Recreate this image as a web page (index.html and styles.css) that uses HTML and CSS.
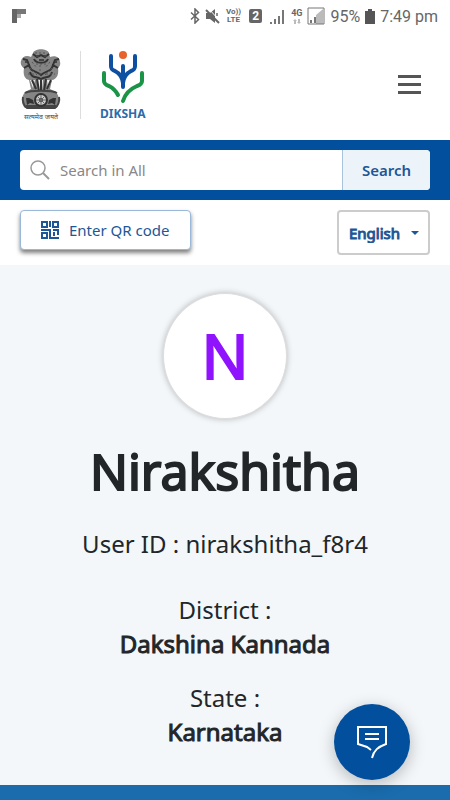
FILE: index.html
```html
<!DOCTYPE html>
<html lang="en">
<head>
    <meta charset="UTF-8">
    <meta name="viewport" content="width=device-width, initial-scale=1.0">
    <title>DIKSHA - Profile</title>
    <link rel="stylesheet" href="styles.css">
</head>
<body>
    <div class="status-bar">
        <svg width="14" height="14" viewBox="0 0 14 14"><path fill="#666" d="M0 0h5v14H0z"/><path fill="#777" d="M5 0h9v5H5z"/><path fill="#aaa" d="M5 5h4v4H5z"/></svg>
        <div class="status-icons">
            <svg width="10" height="16" viewBox="0 0 10 16" fill="none" stroke="#666" stroke-width="1.5"><path d="M1 4.500l7.500 7L5 15V1l3.500 3.500L1 11.500"/></svg>
            <svg width="16" height="16" viewBox="0 0 16 16"><path fill="#666" d="M1 5h4l5-4v14l-5-4H1z"/><path d="M3 0l12 13" stroke="#fff"/><path d="M1 2l13 13" stroke="#666" stroke-width="2"/><path d="M12 5v3" stroke="#666" stroke-width="1.500"/></svg>
            <span class="volte">Vo))<br>LTE</span>
            <span class="sim">2</span>
            <svg width="16" height="15" viewBox="0 0 16 15"><path fill="#777" d="M0 13h2v2H0zM4 10h2v5H4zM8 7h2v8H8zM12 1h2v14h-2z"/></svg>
            <span class="network">4G<svg width="8" height="5" viewBox="0 0 8 5"><path fill="#bbb" d="M0 2l2-2 2 2H3v3H1V2zM4 3l2 2 2-2H7V0H5v3z"/></svg></span>
            <svg width="18" height="18" viewBox="0 0 18 18"><path fill="#bbb" d="M9 17V8l7-6v15z"/><path fill="#777" d="M3 13h2v3H3zM7 10h2v6H7z"/><path fill="none" stroke="#777" d="M1 1h16v16H1z"/></svg>
            <span>95%</span>
            <svg width="10" height="15" viewBox="0 0 10 15"><path fill="#555" d="M3 0h4v2h3v13H0V2h3z"/></svg>
            <span>7:49 pm</span>
        </div>
    </div>

    <header>
        <a href="#" class="emblem" aria-label="Government of India">
            <svg width="42" height="64" viewBox="0 0 42 64">
                <path fill="#858585" d="M13 4c2-5 14-5 16 0l1 4c5-2 10 0 10 5 1 3-1 5-2 6 1 6-1 11-6 12l-2 9 6 3c4 5 4 12 0 16H5c-4-4-4-11 0-16l6-3-2-9c-5-1-6-6-5-12-2-1-4-4-3-7 1-5 6-6 10-4z"/>
                <path fill="#eee" d="M10 31l3 8 2-8zM18 31l1 10h3l1-10zM27 31l1 9 4-9z"/>
                <path fill="none" stroke="#333" stroke-width="2" d="M13 5l4 3 4-2 4 2 4-3M14 10c2 5 12 5 14 0M3 10l4 1 2 5-5 3M39 10l-4 1-2 5 5 3M9 16c2 8 7 5 12 10 5-5 10-2 12-10M10 23c2 7 6 4 11 7 5-3 9 0 11-7M12 31l4 9M17 30l2 12M21 31v10M26 30l-2 12M31 31l-4 9"/>
                <path fill="none" stroke="#555" stroke-dasharray="2 2" d="M12 13l5 6M30 13l-5 6M16 15h10M8 25h8M26 25h9M15 4h12M20 16v12M10 19l7 7M32 19l-7 7"/>
                <path fill="#444" d="M16 6h3v2h-3zM24 6h3v2h-3zM19 10h5v2h-5zM5 12h2v2H5zM35 12h2v2h-2z"/>
                <path fill="none" stroke="#444" stroke-width="2" d="M5 44c5-3 27-3 32 0M3 48c-1 4 1 9 4 11h28c3-2 5-7 4-11M6 57h30"/>
                <path fill="#333" d="M6 49h3l4 2 1 4-4-1-3 2zM36 49h-3l-4 2-1 4 4-1 3 2z"/>
                <circle cx="21" cy="51" r="6" fill="#ccc" stroke="#333" stroke-width="2"/>
                <circle cx="21" cy="51" r="2" fill="#333"/>
                <path stroke="#666" d="M21 46v10M16 51h10M18 48l6 6M24 48l-6 6"/>
            </svg>
            <span lang="hi">सत्यमेव जयते</span>
        </a>
        <a href="#" class="brand">
            <svg width="44" height="54" viewBox="0 0 44 54" fill="none" stroke-width="4" stroke-linecap="round">
                <circle cx="22" cy="5" r="4" fill="#e8622c"/>
                <g stroke="#0d4fa0">
                    <path d="M10 6v10c0 3 1 4 4 5 4 2 7 5 8 12M34 6v10c0 3-1 4-4 5-4 2-7 5-8 12M22 16v21"/>
                </g>
                <g stroke="#1b9448">
                    <path d="M3 23v8c0 3 2 4 5 5 4 2 7 5 9 9M41 23v8c0 3-2 4-5 5-7 3-12 8-14 15"/>
                </g>
            </svg>
            <span>DIKSHA</span>
        </a>
        <button type="button" class="menu" aria-label="Menu"><i></i><i></i><i></i></button>
    </header>

    <form class="search-bar">
        <div class="search-box">
            <svg width="20" height="20" viewBox="0 0 20 20" fill="none" stroke="#999"><circle cx="8" cy="8" r="7" stroke-width="1.500"/><path stroke-width="2" d="M13 13l6 6"/></svg>
            <input type="search" placeholder="Search in All" aria-label="Search in All">
            <button type="submit">Search</button>
        </div>
    </form>

    <div class="toolbar">
        <button type="button" class="qr">
            <svg width="18" height="18" viewBox="0 0 18 18" fill="none" stroke="#1d5796" stroke-width="2"><path d="M1 1h5v5H1zM12 1h5v5h-5zM1 12h5v5H1zM9 0v6M0 9h9v8h9M12 9h5v5M13 11v4"/></svg>
            Enter QR code
        </button>
        <div class="language">
            <select aria-label="Language">
                <option>English</option>
            </select>
        </div>
    </div>

    <main>
        <div class="avatar">N</div>
        <h1>Nirakshitha</h1>
        <p class="user-id">User ID : nirakshitha_f8r4</p>
        <dl>
            <dt>District :</dt>
            <dd>Dakshina Kannada</dd>
            <dt>State :</dt>
            <dd>Karnataka</dd>
        </dl>
    </main>

    <footer></footer>

    <button type="button" class="chat" aria-label="Help">
        <svg width="32" height="34" viewBox="0 0 32 34" fill="none" stroke="#fff" stroke-width="2"><path d="M15 25l-4-3-9-3V2h28v17c-8 3-12 6-14 14M9 9h14M9 14h14"/></svg>
    </button>
</body>
</html>
```
FILE: styles.css
```css
* {
    box-sizing: border-box;
}

body {
    margin: 0;
    min-height: 100vh;
    display: flex;
    flex-direction: column;
    font-family: "Noto Sans", sans-serif;
    font-size: 15px;
    color: #222629;
    background: #fff;
}

svg {
    display: block;
    flex: none;
}

button,
input,
select {
    font: inherit;
}

a {
    text-decoration: none;
}

/* phone status bar */
.status-bar {
    display: flex;
    justify-content: space-between;
    align-items: center;
    height: 32px;
    padding: 0 12px;
    font-family: Roboto, sans-serif;
    font-size: 16px;
    color: #666;
}

.status-icons {
    display: flex;
    align-items: center;
    gap: 5px;
}

.volte {
    font-size: 8px;
    font-weight: bold;
    line-height: 8px;
    text-align: center;
}

.sim {
    width: 13px;
    margin: 0 3px;
    border-radius: 2px;
    background: #666;
    color: #fff;
    font-size: 12px;
    font-weight: bold;
    line-height: 14px;
    text-align: center;
}

.network {
    display: flex;
    flex-direction: column;
    align-items: center;
    gap: 1px;
    font-size: 9px;
    font-weight: bold;
    line-height: 9px;
}

/* header */
header {
    display: flex;
    align-items: center;
    height: 108px;
    padding: 0 20px 4px;
}

.emblem {
    width: 61px;
    height: 68px;
    margin-top: 2px;
    border-right: 1px solid #ddd;
    color: #444;
    font-size: 7px;
    line-height: 8px;
}

.emblem svg {
    margin-top: -2px;
}

.emblem span {
    display: block;
    width: 42px;
    text-align: center;
    white-space: nowrap;
}

.brand {
    display: flex;
    flex-direction: column;
    align-items: center;
    gap: 2px;
    margin-left: 19px;
    padding-top: 4px;
    color: #2b6cab;
    font-size: 12px;
    font-weight: bold;
    line-height: 16px;
}

.menu {
    display: flex;
    flex-direction: column;
    gap: 5px;
    margin-left: auto;
    padding: 0;
    border: 0;
    background: none;
}

.menu i {
    width: 23px;
    height: 3px;
    margin-right: 9px;
    background: #555;
}

/* search */
.search-bar {
    padding: 10px 20px;
    background: #024f9d;
}

.search-box {
    display: flex;
    align-items: center;
    height: 40px;
    padding-left: 10px;
    border-radius: 4px;
    background: #fff;
    overflow: hidden;
}

.search-box input {
    flex: 1;
    min-width: 0;
    padding: 0 10px;
    border: 0;
    outline: 0;
    background: none;
}

.search-box input::placeholder {
    color: #888;
}

.search-box button {
    align-self: stretch;
    width: 88px;
    border: 0;
    border-left: 1px solid #a9c3dd;
    background: #edf4f9;
    color: #1d5796;
    font-weight: 600;
}

/* qr and language */
.toolbar {
    display: flex;
    justify-content: space-between;
    align-items: flex-start;
    padding: 10px 20px;
}

.qr {
    display: flex;
    align-items: center;
    gap: 10px;
    height: 40px;
    padding: 0 20px;
    border: 1px solid #9ab8d8;
    border-radius: 4px;
    background: #fff;
    color: #1d5796;
    box-shadow: 0 3px 4px rgba(0, 0, 0, 0.5);
}

.language {
    position: relative;
}

.language select {
    appearance: none;
    width: 93px;
    height: 45px;
    padding: 0 10px;
    border: 2px solid #ccc;
    border-radius: 4px;
    background: #fff;
    color: #1d5796;
    -webkit-text-stroke: 1px;
}

/* arrow over the select */
.language::after {
    content: "";
    position: absolute;
    top: 21px;
    right: 11px;
    border: 4px solid transparent;
    border-top-color: #1d5796;
    pointer-events: none;
}

/* profile */
main {
    flex: 1;
    padding: 28px 20px 36px;
    background: #f3f7fa;
    text-align: center;
}

.avatar {
    width: 124px;
    height: 126px;
    margin: 0 auto;
    border: 1px solid #ddd;
    border-radius: 50%;
    background: #fff;
    box-shadow: 0 0 6px rgba(0, 0, 0, 0.25);
    color: #9013fe;
    font-size: 62px;
    line-height: 122px;
    -webkit-text-stroke: 2px;
}

h1 {
    margin: 16px 0 20px;
    font-size: 50px;
    font-weight: normal;
    line-height: 72px;
    -webkit-text-stroke: 2px;
}

.user-id {
    margin: 0 0 32px;
    font-size: 24px;
    line-height: 34px;
}

dl {
    margin: 0;
    font-size: 24px;
    line-height: 34px;
}

dd {
    margin: 0 0 20px;
    -webkit-text-stroke: 1px;
}

dd:last-child {
    margin: 0;
}

footer {
    height: 15px;
    background: #1a6cad;
}

.chat {
    position: fixed;
    right: 40px;
    bottom: 20px;
    display: flex;
    align-items: center;
    justify-content: center;
    width: 76px;
    height: 76px;
    padding: 0;
    border: 0;
    border-radius: 50%;
    background: #024f9d;
    box-shadow: 0 4px 16px rgba(0, 0, 0, 0.25);
}
```
